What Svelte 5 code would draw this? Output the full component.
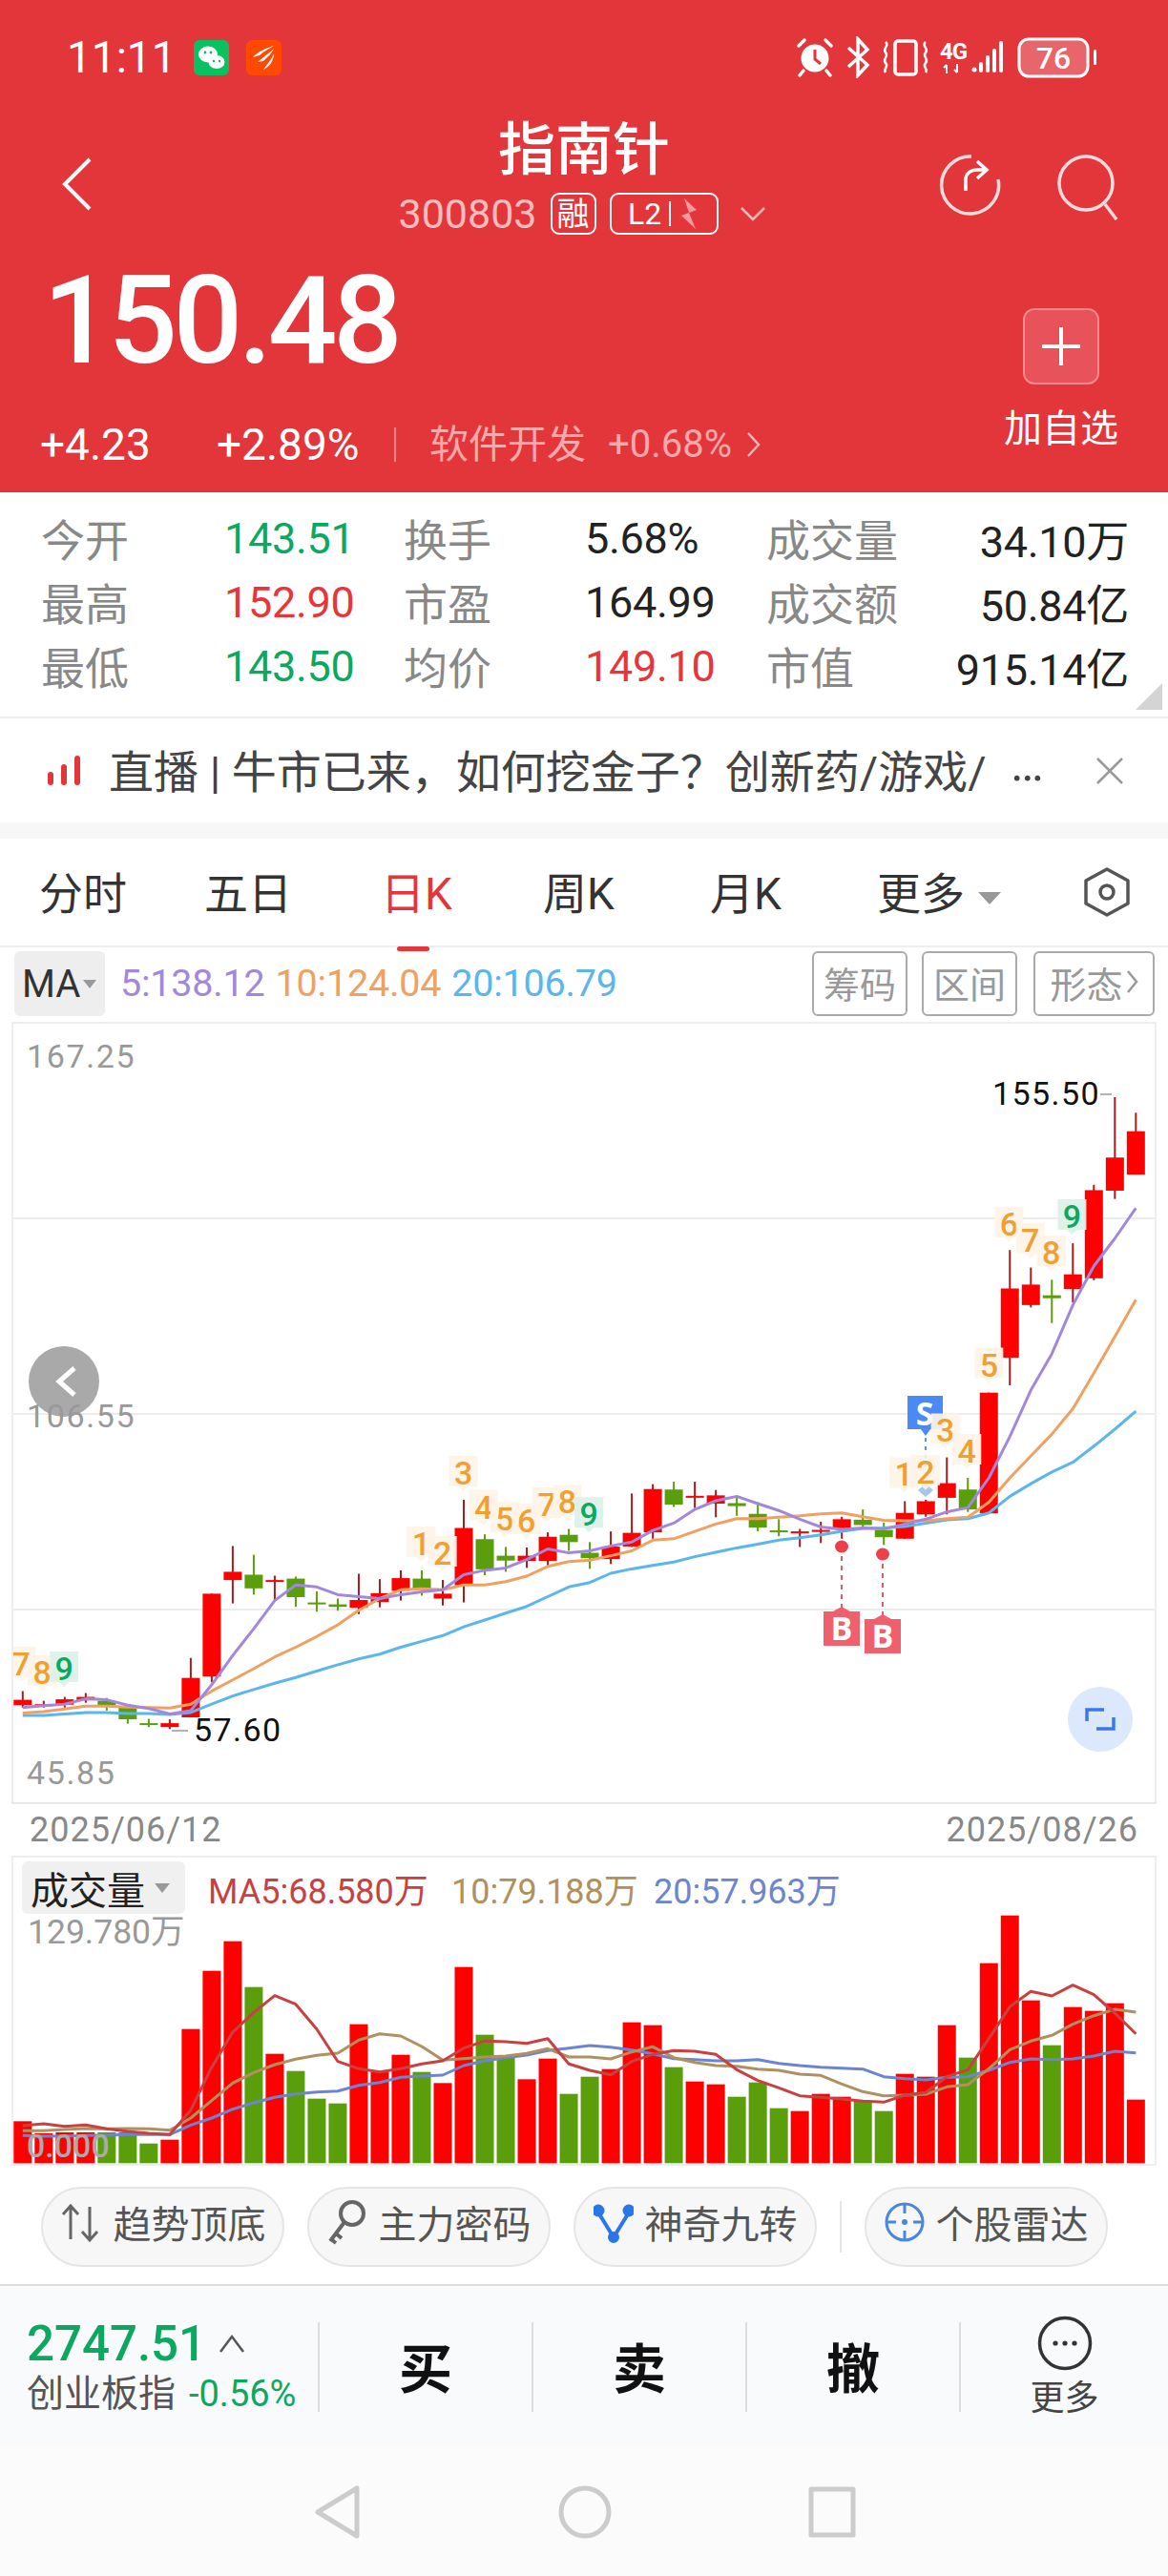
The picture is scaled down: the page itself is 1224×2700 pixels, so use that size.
<script>
  const stats = [
    ['今开', '143.51', 'green', '换手', '5.68%', '', '成交量', '34.10万'],
    ['最高', '152.90', 'red', '市盈', '164.99', '', '成交额', '50.84亿'],
    ['最低', '143.50', 'green', '均价', '149.10', 'red', '市值', '915.14亿']
  ];
  const tabs = ['分时', '五日', '日K', '周K', '月K'];

  // sampled from the screenshot: x = 23.8 + i * 22.01, y in 1.96 units per px, offset so that 0 is y=1100
  const ky = (v) => v / 1.96 + 29;
  const vy = (v) => v / 3 - 5;
  const cx = (i) => 23.8 + i * 22.01 - 12;

  // [high, top, bottom, low, colour]
  const candles = [
    [1318,1336,1347,1352,'r'],[1338,1345,1347,1352,'r'],[1330,1335,1346,1352,'r'],[1322,1330,1337,1342,'r'],
    [1332,1338,1348,1358,'g'],[1350,1352,1376,1385,'g'],[1375,1384,1386,1392,'g'],[1376,1384,1392,1396,'r'],
    [1250,1291,1372,1372,'r'],[1118,1118,1288,1300,'r'],[1020,1073,1090,1138,'r'],[1038,1079,1107,1120,'g'],
    [1081,1090,1093,1132,'r'],[1083,1087,1125,1145,'g'],[1113,1136,1140,1155,'g'],[1128,1140,1145,1153,'g'],
    [1077,1131,1147,1160,'r'],[1088,1117,1135,1146,'r'],[1070,1086,1112,1132,'r'],[1070,1087,1110,1122,'g'],
    [1090,1118,1128,1142,'r'],[925,983,1101,1136,'r'],[996,1006,1068,1080,'g'],[1022,1040,1050,1073,'g'],
    [1023,1040,1051,1065,'r'],[992,1001,1051,1060,'r'],[985,997,1012,1030,'g'],[1012,1034,1045,1067,'g'],
    [990,1021,1047,1057,'r'],[912,993,1021,1022,'r'],[893,903,992,1005,'r'],[888,904,935,940,'g'],
    [888,917,920,942,'r'],[905,916,933,961,'r'],[920,932,938,958,'g'],[930,954,982,990,'g'],
    [965,988,992,1000,'g'],[985,990,992,1022,'r'],[970,987,991,1014,'r'],[960,965,985,1005,'r'],
    [945,966,977,985,'g'],[972,987,1002,1018,'g'],[928,952,1005,1005,'r'],[925,928,955,960,'r'],
    [838,891,921,955,'r'],[880,904,945,950,'g'],[705,705,953,953,'r'],[412,491,633,690,'r'],
    [448,483,525,530,'r'],[473,505,511,562,'g'],[398,462,492,520,'r'],[278,289,470,474,'r'],
    [98,222,290,307,'r'],[130,168,257,257,'r']
  ];

  const ma5 = [1352,1348,1345,1334,1336,1347,1354,1365,1358,1305,1245,1190,1132,1100,1104,1120,1124,1128,1120,1114,1110,1079,1070,1065,1048,1026,1034,1030,1020,1012,988,973,945,927,918,933,947,965,981,986,983,985,975,965,950,941,880,795,700,625,525,445,388,326];
  const ma10 = [1363,1360,1355,1349,1349,1351,1352,1353,1345,1318,1295,1272,1248,1228,1206,1182,1152,1128,1110,1108,1110,1100,1100,1093,1082,1062,1052,1049,1040,1030,1008,1005,990,975,964,964,961,958,954,952,960,967,968,968,964,961,930,880,835,790,738,665,590,514];
  const ma20 = [1368,1368,1365,1362,1362,1364,1364,1366,1362,1345,1328,1315,1302,1290,1277,1264,1252,1242,1228,1216,1204,1186,1172,1158,1144,1124,1104,1095,1076,1067,1060,1053,1042,1033,1024,1016,1008,1003,997,990,984,983,980,973,966,964,952,918,892,868,848,815,780,743];

  const marks = [
    [57,1262,'7'],[113,1280,'8'],[172,1272,'9'],[1130,1015,'1'],[1187,1035,'2'],[1243,870,'3'],[1297,940,'4'],
    [1354,965,'5'],[1412,968,'6'],[1467,935,'7'],[1522,930,'8'],[1580,955,'9'],
    [2425,873,'1'],[2483,868,'2'],[2536,783,'3'],[2594,825,'4'],[2653,648,'5'],[2707,358,'6'],[2764,392,'7'],[2820,418,'8'],[2876,343,'9']
  ];

  const volumes = [
    [850,'r'],[888,'r'],[885,'r'],[885,'r'],[885,'g'],[885,'g'],[920,'g'],[908,'r'],[560,'r'],[377,'r'],[284,'r'],[428,'g'],
    [638,'r'],[692,'g'],[779,'g'],[794,'g'],[545,'r'],[695,'r'],[641,'r'],[695,'g'],[730,'r'],[365,'r'],[578,'g'],[650,'g'],
    [718,'r'],[653,'r'],[764,'g'],[710,'g'],[686,'r'],[539,'r'],[548,'r'],[680,'g'],[725,'r'],[734,'r'],[773,'g'],[728,'g'],
    [809,'g'],[818,'r'],[764,'r'],[773,'r'],[785,'g'],[818,'g'],[701,'r'],[710,'r'],[548,'r'],[650,'g'],[353,'r'],[203,'r'],
    [470,'r'],[611,'g'],[491,'r'],[503,'r'],[479,'r'],[782,'r']
  ];
  const vma5 = [864,858,866,862,874,882,888,892,815,680,570,508,455,482,560,662,685,695,685,670,660,620,598,600,605,590,670,690,704,662,640,628,630,640,688,722,745,770,775,780,787,790,768,760,710,688,590,490,442,456,422,452,510,575];
  const vma10 = [880,880,876,873,874,873,874,878,840,785,730,697,672,655,643,636,595,575,582,615,658,653,648,645,637,622,648,648,654,632,616,650,665,675,677,686,690,702,706,733,757,770,768,765,742,735,685,625,598,580,545,518,498,507];
  const vma20 = [895,897,897,895,894,892,892,892,862,840,812,792,775,764,758,755,737,728,712,708,705,675,660,650,642,628,620,612,617,626,638,653,656,660,660,656,668,675,680,683,686,710,716,720,712,710,690,665,654,656,654,645,630,635];

  const line = (ys, f) => ys.map((v, i) => `${cx(i).toFixed(1)},${f(v).toFixed(1)}`).join(' ');
</script>

<div class="page">
  <header class="head">
    <div class="status">
      <span class="time">11:11</span>
      <svg class="app" width="37" height="37" viewBox="0 0 37 37">
        <rect width="37" height="37" rx="6" fill="#08c160"/>
        <ellipse cx="15" cy="15" rx="10" ry="8.5" fill="#fff"/>
        <ellipse cx="24" cy="23" rx="8.5" ry="7" fill="#fff"/>
        <circle cx="12" cy="13" r="1.4" fill="#08c160"/><circle cx="18" cy="13" r="1.4" fill="#08c160"/>
        <circle cx="21" cy="22" r="1.2" fill="#08c160"/><circle cx="27" cy="22" r="1.2" fill="#08c160"/>
      </svg>
      <svg class="app" width="37" height="37" viewBox="0 0 37 37">
        <rect width="37" height="37" rx="6" fill="#ff4800"/>
        <path d="M29 6 C22 8 12 12 7 18 L14 16 C18 12 24 9 29 6Z M29 9 C25 13 19 17 12 23 L18 22 C22 18 27 14 29 9Z M29 14 C27 20 22 25 18 31 C24 28 29 22 29 14Z" fill="#fff"/>
      </svg>
      <span class="grow"></span>
      <svg width="322" height="44" viewBox="0 0 322 44" fill="none" stroke="#fff" stroke-width="3">
        <circle cx="20" cy="23" r="13" fill="#fff"/>
        <path d="M20 14v10l6 5" stroke="#e3363a"/>
        <path d="M3 10 9 4M37 10l-6-6M8 36l-4 5M32 36l4 5" stroke-linecap="round" stroke-width="3.5"/>
        <path d="M55 12 75 30 65 41V3l10 11-20 18" stroke-width="3.5"/>
        <rect x="104" y="5" width="22" height="35" rx="3" stroke-width="3.5"/>
        <path d="M94 6c5 4-4 7 0 11s-4 7 0 11-3 6 0 10M136 6c-5 4 4 7 0 11s4 7 0 11 3 6 0 10" stroke-width="2.5"/>
        <circle cx="187" cy="35" r="2.5" fill="#fff" stroke="none"/>
        <rect x="192" y="27" width="4" height="11" rx="2" fill="#fff" stroke="none"/>
        <rect x="199" y="20" width="4" height="18" rx="2" fill="#fff" stroke="none"/>
        <rect x="206" y="13" width="4" height="25" rx="2" fill="#fff" stroke="none"/>
        <rect x="213" y="5" width="4" height="33" rx="2" fill="#fff" stroke="none"/>
        <path d="M158 30v9M155 33l3-3M169 29v9M166 35l3 3" stroke-width="2"/>
        <rect x="234" y="3" width="72" height="39" rx="10" fill="#e8656b"/>
        <rect x="312" y="14" width="3" height="16" rx="1.5" fill="#fff" stroke="none"/>
        <text x="270" y="34" class="batt" text-anchor="middle" fill="#fff" stroke="none">76</text>
        <text x="165" y="24" class="fourg" text-anchor="middle" fill="#fff" stroke="none">4G</text>
      </svg>
    </div>

    <div class="titlebar">
      <svg class="back" width="34" height="56" viewBox="0 0 34 56" fill="none" stroke="#fff" stroke-width="4"><path d="M30 2 4 28l26 26"/></svg>
      <div class="title">
        <div class="name">指南针</div>
        <div class="code">
          <span>300803</span>
          <span class="tag rong">融</span>
          <span class="tag l2">L2<i></i>
            <svg width="22" height="34" viewBox="0 0 22 34"><path d="M6 1 19 13 11 16 18 33 3 19 11 16Z" fill="#f29a9e"/></svg>
          </span>
          <svg class="codearrow" width="28" height="16" viewBox="0 0 28 16" fill="none" stroke="#f5b9bb" stroke-width="2.5"><path d="M2 2 14 14 26 2"/></svg>
        </div>
      </div>
      <div class="tools">
        <svg width="68" height="68" viewBox="0 0 68 68" fill="none" stroke="#fff" stroke-width="3.5">
          <path d="M36 4a30 30 0 1 0 28 24" stroke="#fbdcdc"/>
          <path d="M30 40V28c0-6 5-10 12-10h8M42 9l10 9-10 9"/>
        </svg>
        <svg width="68" height="72" viewBox="0 0 68 72" fill="none" stroke="#fbdcdc" stroke-width="3.5">
          <circle cx="32" cy="32" r="28"/><path d="M52 54l12 16"/>
        </svg>
      </div>
    </div>

    <div class="quote">
      <div>
        <div class="price">150.48</div>
        <div class="sub">
          <span class="w1">+4.23</span>
          <span class="w2">+2.89%</span>
          <i class="sep"></i>
          <span class="sector">软件开发</span>
          <span class="spct">+0.68%</span>
          <svg width="15" height="28" viewBox="0 0 15 28" fill="none" stroke="#f5b9bb" stroke-width="2.5"><path d="M2 2 13 14 2 26"/></svg>
        </div>
      </div>
      <div class="add">
        <div class="plus">
          <svg width="42" height="42" viewBox="0 0 42 42" stroke="#fff" stroke-width="4"><path d="M21 1v40M1 21h40"/></svg>
        </div>
        <span>加自选</span>
      </div>
    </div>
  </header>

  <section class="stats">
    {#each stats as r}
      <span class="lab">{r[0]}</span>
      <span class="val {r[2]}">{r[1]}</span>
      <span class="lab">{r[3]}</span>
      <span class="val {r[5]}">{r[4]}</span>
      <span class="lab">{r[6]}</span>
      <span class="val end">{r[7]}</span>
    {/each}
    <b class="corner"></b>
  </section>

  <section class="banner">
    <svg width="36" height="32" viewBox="0 0 36 32" fill="#e3363a"><rect y="17" width="6" height="14" rx="3"/><rect x="14" y="9" width="6" height="22" rx="3"/><rect x="28" y="0" width="6" height="31" rx="3"/></svg>
    <span class="news">直播 | 牛市已来，如何挖金子？创新药/游戏/</span>
    <span class="dots">…</span>
    <svg width="30" height="30" viewBox="0 0 30 30" stroke="#999" stroke-width="2.5"><path d="M2 2 28 28M28 2 2 28"/></svg>
  </section>

  <nav class="tabs">
    {#each tabs as t}
      <span class="tab" class:on={t === '日K'}>{t}</span>
    {/each}
    <span class="tab more">更多<em></em></span>
    <svg width="52" height="54" viewBox="0 0 52 54" fill="none" stroke="#555" stroke-width="3.5">
      <path d="M26 3 48 15v24L26 51 4 39V15Z" stroke-linejoin="round"/><circle cx="26" cy="27" r="7"/>
    </svg>
  </nav>

  <div class="ma">
    <span class="mabtn">MA<em></em></span>
    <span class="m5">5:138.12</span>
    <span class="m10">10:124.04</span>
    <span class="m20">20:106.79</span>
    <span class="grow"></span>
    <span class="ghost">筹码</span>
    <span class="ghost">区间</span>
    <span class="ghost wide">形态<svg width="13" height="26" viewBox="0 0 13 26" fill="none" stroke="#999" stroke-width="2.5"><path d="M2 2 11 13 2 24"/></svg></span>
  </div>

  <div class="kline">
    <svg width="1200" height="820" viewBox="0 0 1200 820">
      <g stroke="#ececec" stroke-width="2">
        <path d="M0 206H1200M0 411H1200M0 616H1200"/>
      </g>
      {#each candles as c, i}
        <line x1={cx(i)} x2={cx(i)} y1={ky(c[0])} y2={ky(c[3])} stroke={c[4] === 'r' ? '#a81c1c' : '#5a9e0c'} stroke-width="2"/>
        <rect x={cx(i) - 9.5} y={ky(c[1])} width="19" height={Math.max(ky(c[2]) - ky(c[1]), 2)} fill={c[4] === 'r' ? '#ff0000' : '#5a9e0c'}/>
      {/each}
      <g fill="none" stroke-width="3" stroke-linejoin="round">
        <polyline points={line(ma20, ky)} stroke="#5ab6ec"/>
        <polyline points={line(ma10, ky)} stroke="#f0a060"/>
        <polyline points={line(ma5, ky)} stroke="#a288dc"/>
      </g>

      <!-- S and B signals -->
      <path d="M958 436 V484" stroke="#5b8ef0" stroke-width="2" stroke-dasharray="4 5"/>
      <path d="M950 491 958 484 966 491 958 498Z" fill="#a9c4ee"/>
      <path d="M939 392H976V427H963L958 434 953 427H939Z" fill="#4a8af4"/>
      <text x="957" y="423" class="sig" text-anchor="middle">S</text>
      <path d="M870 550 V614M913 558 V622" stroke="#ee5560" stroke-width="2" stroke-dasharray="5 5"/>
      <ellipse cx="870" cy="550" rx="7" ry="6.5" fill="#ee3f4d"/>
      <ellipse cx="913" cy="558" rx="7" ry="6.5" fill="#ee3f4d"/>
      <path d="M851 618H861L870 613 879 618H889V654H851Z" fill="#f0606c"/>
      <path d="M894 626H904L913 621 922 626H932V662H894Z" fill="#f0606c"/>
      <text x="870" y="648" class="sig" text-anchor="middle">B</text>
      <text x="913" y="656" class="sig" text-anchor="middle">B</text>

      {#each marks as m}
        {@const x = m[0] / 2.56 - 12}
        {@const y = ky(m[1])}
        {@const nine = m[2] === '9'}
        <path d="M{x - 15} {y - 18}H{x + 15}V{y + 14}H{x + 5}L{x} {y + 19} {x - 5} {y + 14}H{x - 15}Z" fill={nine ? '#dbf1e7' : '#fdf3e8'} opacity="0.92"/>
        <text {x} y={y + 12} class="mark" text-anchor="middle" fill={nine ? '#0aa860' : '#f0a030'}>{m[2]}</text>
      {/each}

      <text x="16" y="48" class="axis">167.25</text>
      <circle cx="55" cy="377" r="37" fill="#a9a9a9"/>
      <path d="M66 363 50 377l16 14" fill="none" stroke="#fff" stroke-width="5"/>
      <text x="16" y="425" class="axis">106.55</text>
      <text x="16" y="799" class="axis">45.85</text>

      <path d="M168 743H185" stroke="#999" stroke-width="1.5"/>
      <text x="191" y="754" class="hl">57.60</text>
      <path d="M1141 76H1153" stroke="#999" stroke-width="1.5"/>
      <text x="1028" y="87" class="hl">155.50</text>

      <ellipse cx="1141" cy="731" rx="34" ry="34" fill="#dce8fb"/>
      <path d="M1127 733V721H1145M1155 729V741H1137" fill="none" stroke="#3a78e8" stroke-width="3.5"/>
    </svg>
  </div>

  <div class="dates"><span>2025/06/12</span><span>2025/08/26</span></div>

  <div class="vol">
    <div class="volhead">
      <span class="volbtn">成交量<em></em></span>
      <span class="v5">MA5:68.580万</span>
      <span class="v10">10:79.188万</span>
      <span class="v20">20:57.963万</span>
    </div>
    <span class="volmax">129.780万</span>
    <svg class="volsvg" width="1200" height="325" viewBox="0 0 1200 325">
      {#each volumes as b, i}
        <rect x={cx(i) - 9.5} y={vy(b[0])} width="19" height={vy(982) - vy(b[0])} fill={b[1] === 'r' ? '#ff0000' : '#5a9e0c'}/>
      {/each}
      <g fill="none" stroke-width="3" stroke-linejoin="round">
        <polyline points={line(vma20, vy)} stroke="#6c85d0"/>
        <polyline points={line(vma10, vy)} stroke="#b0905f"/>
        <polyline points={line(vma5, vy)} stroke="#c94040"/>
      </g>
      <text x="16" y="316" class="zero">0.000</text>
    </svg>
  </div>

  <div class="pills">
    <span class="pill">
      <svg width="44" height="44" viewBox="0 0 44 44" fill="none" stroke="#666" stroke-width="3"><path d="M11 40V6M3 14l8-9 8 9M31 6v34M23 32l8 9 8-9"/></svg>
      趋势顶底
    </span>
    <span class="pill">
      <svg width="42" height="48" viewBox="0 0 42 48" fill="none" stroke="#666" stroke-width="4"><circle cx="26" cy="15" r="12"/><path d="M18 24 3 44M9 36l6 5M4 42l5 4"/></svg>
      主力密码
    </span>
    <span class="pill">
      <svg width="42" height="44" viewBox="0 0 42 44" fill="none" stroke="#2a76e8" stroke-width="4"><path d="M5 12 21 38 37 12"/><circle cx="5" cy="10" r="4.5" fill="#2a76e8"/><circle cx="37" cy="10" r="4.5" fill="#2a76e8"/><circle cx="21" cy="38" r="4" fill="#2a76e8"/></svg>
      神奇九转
    </span>
    <i class="pdiv"></i>
    <span class="pill">
      <svg width="42" height="44" viewBox="0 0 42 44" fill="none" stroke="#4a86e0" stroke-width="3"><circle cx="21" cy="22" r="19"/><path d="M21 3v10M21 31v10M2 22h10M30 22h10"/><circle cx="21" cy="22" r="3" fill="#4a86e0" stroke="none"/></svg>
      个股雷达
    </span>
  </div>

  <footer class="bar">
    <div class="idx">
      <div class="idxtop">2747.51
        <svg width="30" height="24" viewBox="0 0 30 24" fill="none" stroke="#555" stroke-width="2.5"><path d="M3 20 15 4l12 16"/></svg>
      </div>
      <div class="idxbot"><span>创业板指</span><b>-0.56%</b></div>
    </div>
    <span class="act">买</span>
    <span class="act">卖</span>
    <span class="act">撤</span>
    <div class="act moreact">
      <svg width="58" height="58" viewBox="0 0 58 58" fill="none" stroke="#333" stroke-width="3.5"><circle cx="29" cy="29" r="26.5"/><g fill="#333" stroke="none"><circle cx="19" cy="29" r="2.6"/><circle cx="29" cy="29" r="2.6"/><circle cx="39" cy="29" r="2.6"/></g></svg>
      <span>更多</span>
    </div>
  </footer>

  <div class="sysnav">
    <svg width="50" height="58" viewBox="0 0 50 58" fill="none" stroke="#ccc" stroke-width="5" stroke-linejoin="round"><path d="M45 4V54L4 29Z"/></svg>
    <svg width="58" height="58" viewBox="0 0 58 58" fill="none" stroke="#ccc" stroke-width="5"><circle cx="29" cy="29" r="25"/></svg>
    <svg width="50" height="54" viewBox="0 0 50 54" fill="none" stroke="#ccc" stroke-width="5" stroke-linejoin="round"><rect x="3" y="3" width="44" height="48"/></svg>
  </div>
</div>

<style>
  :global(body) {
    background: #fff;
  }
  .page {
    width: 1224px;
    height: 2700px;
    overflow: hidden;
    font-family: Roboto, "Noto Sans CJK SC", sans-serif;
    color: #222;
  }
  .grow { flex: 1; }

  /* header */
  .head {
    height: 516px;
    background: #e3363a;
    color: #fff;
  }
  .status {
    height: 120px;
    padding: 0 68px 0 70px;
    display: flex;
    align-items: center;
    gap: 0;
  }
  .time { font-size: 46px; width: 133px; }
  .app { margin-right: 18px; }
  .batt { font: 500 32px Roboto, sans-serif; }
  .fourg { font: 700 24px Roboto, sans-serif; letter-spacing: -1px; }
  .titlebar {
    height: 130px;
    position: relative;
    display: flex;
    justify-content: center;
  }
  .back { position: absolute; left: 64px; top: 45px; }
  .tools {
    position: absolute;
    right: 50px;
    top: 40px;
    display: flex;
    gap: 56px;
  }
  .title { text-align: center; }
  .name { font-size: 60px; font-weight: 500; line-height: 78px; margin-top: -1px; }
  .code {
    display: flex;
    align-items: center;
    gap: 14px;
    font-size: 43px;
    color: #f7bcbd;
    line-height: 46px;
    margin-left: -4px;
    margin-top: 4px;
  }
  .codearrow { margin-left: 8px; }
  .tag {
    border: 2px solid #fff;
    border-radius: 9px;
    height: 44px;
    display: flex;
    align-items: center;
    color: #fff;
    box-sizing: border-box;
    font-size: 36px;
    justify-content: center;
  }
  .rong { width: 48px; font-size: 34px; }
  .l2 { width: 114px; gap: 8px; font-size: 32px; }
  .l2 i { width: 2px; height: 26px; background: #fff; }
  .quote {
    height: 266px;
    padding: 22px 52px 0 42px;
    display: flex;
    justify-content: space-between;
    box-sizing: border-box;
  }
  .price {
    font-size: 128px;
    font-weight: 500;
    line-height: 128px;
    letter-spacing: -4.5px;
    margin-left: 3px;
    height: 130px;
  }
  .sub {
    margin-top: 38px;
    display: flex;
    align-items: center;
    font-size: 46px;
    line-height: 52px;
  }
  .w1 { width: 185px; }
  .w2 { width: 186px; }
  .sep { width: 2px; height: 36px; background: #f0888a; margin-right: 35px; }
  .sector { font-size: 41px; color: #f5a9ab; width: 187px; }
  .spct { color: #f5a9ab; font-size: 40px; width: 145px; }
  .add {
    width: 120px;
    margin-top: 51px;
    display: flex;
    flex-direction: column;
    align-items: center;
    font-size: 40px;
  }
  .plus {
    width: 80px;
    height: 80px;
    box-sizing: border-box;
    background: #e8525a;
    border: 2px solid #f08a8c;
    border-radius: 12px;
    display: flex;
    align-items: center;
    justify-content: center;
    margin-bottom: 14px;
  }

  /* stats */
  .stats {
    position: relative;
    height: 237px;
    box-sizing: border-box;
    border-bottom: 2px solid #eee;
    padding: 15px 41px 0 43px;
    display: grid;
    grid-template-columns: 192px 188px 190px 190px 1fr auto;
    grid-auto-rows: 67px;
    align-items: center;
    font-size: 45px;
  }
  .lab { color: #888; font-size: 46px; margin-bottom: 4px; }
  .val { color: #222; letter-spacing: -0.3px; }
  .val.green { color: #0aa860; }
  .val.red { color: #e8353a; }
  .val.end { text-align: right; }
  .corner {
    position: absolute;
    right: 6px;
    bottom: 7px;
    width: 0;
    height: 0;
    border-left: 28px solid transparent;
    border-bottom: 28px solid #d4d4d4;
  }

  .banner {
    height: 109px;
    display: flex;
    align-items: center;
    padding: 0 46px 0 50px;
    box-sizing: border-box;
  }
  .news { font-size: 47px; color: #444; margin-left: 28px; width: 945px; white-space: nowrap; margin-bottom: 4px; }
  .dots { font-size: 52px; color: #444; flex: 1; margin-bottom: 14px; }

  .tabs {
    border-top: 17px solid #f7f7f7;
    height: 112px;
    box-sizing: content-box;
    border-bottom: 2px solid #eee;
    position: relative;
    display: grid;
    grid-template-columns: 173px 185px 170px 175px 175px 215px auto;
    align-items: center;
    padding-left: 41px;
    font-size: 46px;
    color: #333;
  }
  .tab { position: relative; margin-bottom: 4px; }
  .tab.on { color: #e3363a; }
  .tab.on::after {
    content: "";
    position: absolute;
    left: 17px;
    bottom: -31px;
    width: 34px;
    height: 5px;
    border-radius: 3px;
    background: #e3363a;
  }
  .tab.more em {
    display: inline-block;
    width: 0;
    height: 0;
    border-left: 12px solid transparent;
    border-right: 12px solid transparent;
    border-top: 13px solid #999;
    margin-left: 14px;
    vertical-align: 5px;
  }

  .ma {
    height: 78px;
    padding: 4px 14px 0 15px;
    box-sizing: border-box;
    display: flex;
    align-items: flex-start;
    font-size: 39.5px;
  }
  .mabtn {
    width: 95px;
    height: 68px;
    box-sizing: border-box;
    background: #eee;
    border-radius: 6px;
    font-size: 40px;
    color: #333;
    display: flex;
    align-items: center;
    padding-left: 8px;
    margin-right: 16px;
  }
  .mabtn em {
    width: 0;
    height: 0;
    border-left: 7px solid transparent;
    border-right: 7px solid transparent;
    border-top: 9px solid #999;
    margin-left: 3px;
  }
  .m5, .m10, .m20 { line-height: 68px; margin-right: 11px; letter-spacing: -0.2px; }
  .m5 { color: #a288dc; }
  .m10 { color: #f0a060; }
  .m20 { color: #5ab6ec; }
  .ghost {
    width: 100px;
    height: 68px;
    box-sizing: border-box;
    border: 2px solid #aaa;
    border-radius: 6px;
    color: #999;
    font-size: 38px;
    display: flex;
    align-items: center;
    justify-content: center;
    margin-left: 15px;
    gap: 6px;
    padding-bottom: 4px;
  }
  .ghost.wide { width: 127px; margin-left: 17px; gap: 3px; }

  .kline {
    margin-left: 12px;
    width: 1200px;
    height: 820px;
    box-sizing: border-box;
    border: 2px solid #eee;
    border-bottom: 2px solid #e8e8e8;
    overflow: hidden;
  }
  .kline svg { display: block; margin: -2px; }
  .axis { font: 34px Roboto, sans-serif; fill: #999; letter-spacing: 1.6px; }
  .hl { font: 34px Roboto, sans-serif; fill: #111; letter-spacing: 1.4px; }
  .mark { font: 500 34px Roboto, sans-serif; }
  .sig { font: 700 34px "Open Sans", sans-serif; fill: #fff; }

  .dates {
    height: 54px;
    margin: 0 31px 0 31px;
    display: flex;
    justify-content: space-between;
    align-items: center;
    font-size: 36px;
    color: #888;
    letter-spacing: 1px;
  }

  .vol {
    position: relative;
    margin-left: 12px;
    width: 1200px;
    height: 325px;
    box-sizing: border-box;
    border: 2px solid #eee;
  }
  .volsvg { position: absolute; left: -2px; top: -2px; }
  .volhead {
    position: relative;
    z-index: 1;
    display: flex;
    align-items: center;
    font-size: 36px;
    margin: 4px 0 0 9px;
  }
  .volbtn {
    width: 171px;
    height: 55px;
    background: #f0f0f0;
    border-radius: 6px;
    font-size: 40px;
    color: #222;
    box-sizing: border-box;
    padding-left: 9px;
    display: flex;
    align-items: center;
    margin-right: 24px;
  }
  .volbtn em {
    width: 0;
    height: 0;
    border-left: 8px solid transparent;
    border-right: 8px solid transparent;
    border-top: 10px solid #999;
    margin-left: 10px;
  }
  .v5 { color: #c94040; width: 255px; }
  .v10 { color: #b0905f; width: 212px; }
  .v20 { color: #6c85d0; }
  .volmax {
    position: absolute;
    left: 15px;
    top: 49px;
    font-size: 35.5px;
    color: #999;
    z-index: 1;
  }
  .zero {
    font: 500 34px Roboto, sans-serif;
    fill: #aaa;
  }

  .pills {
    height: 126px;
    padding-top: 22px;
    box-sizing: border-box;
    display: flex;
    align-items: flex-start;
    padding-left: 43px;
    gap: 24px;
    border-bottom: 2px solid #ddd;
  }
  .pill {
    width: 255px;
    height: 84px;
    box-sizing: border-box;
    background: #f7f7f8;
    border: 2px solid #e5e5e5;
    border-radius: 42px;
    display: flex;
    align-items: center;
    justify-content: center;
    gap: 12px;
    font-size: 40px;
    color: #555;
    white-space: nowrap;
    padding-bottom: 10px;
  }
  .pdiv { width: 2px; height: 54px; background: #e5e5e5; margin: 15px 0 0 0; }

  .bar {
    height: 170px;
    background: #f9fafc;
    display: grid;
    grid-template-columns: 333px 224px 224px 224px 1fr;
    align-items: start;
    padding-top: 38px;
    box-sizing: border-box;
  }
  .idx { padding-left: 28px; }
  .idxtop {
    font-size: 51px;
    color: #0aa860;
    font-weight: 500;
    line-height: 46px;
    display: flex;
    align-items: center;
    gap: 12px;
  }
  .idxbot {
    display: flex;
    align-items: center;
    gap: 14px;
    font-size: 39px;
    color: #555;
    line-height: 48px;
    margin-top: 5px;
  }
  .idxbot b { font-size: 38px; font-weight: 400; color: #0aa860; }
  .act {
    height: 94px;
    border-left: 2px solid #ddd;
    display: flex;
    align-items: center;
    justify-content: center;
    font-size: 56px;
    font-weight: 700;
    color: #111;
    padding-bottom: 6px;
    box-sizing: border-box;
  }
  .moreact {
    flex-direction: column;
    font-size: 36px;
    font-weight: 400;
    color: #444;
    line-height: 44px;
    justify-content: flex-start;
    padding-bottom: 0;
    gap: 7px;
  }
  .moreact svg { flex-shrink: 0; margin-top: -7px; }
  .moreact span { display: block; }

  .sysnav {
    height: 134px;
    background: #fbfbfb;
    display: flex;
    align-items: center;
    justify-content: center;
    gap: 205px;
    padding-left: 2px;
  }
</style>
